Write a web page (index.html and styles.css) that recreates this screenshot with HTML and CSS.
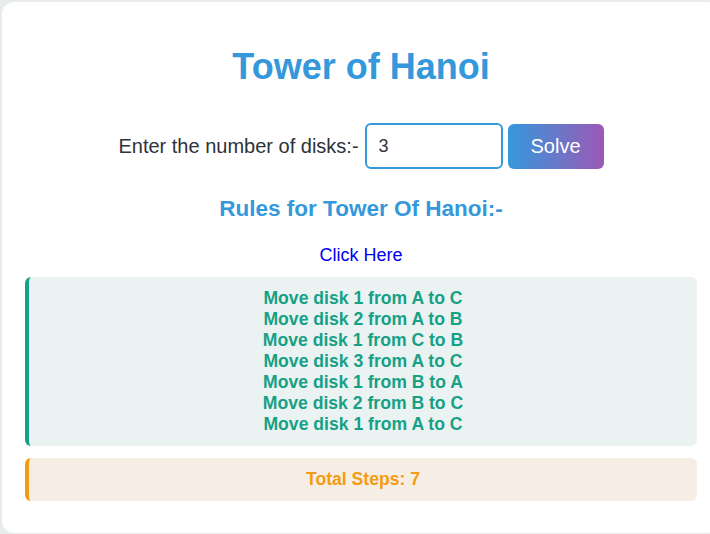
FILE: index.html
```html
<!DOCTYPE html>
<html lang="en">
<head>
<meta charset="UTF-8">
<title>Tower of Hanoi</title>
<link rel="stylesheet" href="styles.css">
</head>
<body>
<div class="card">
  <h1 class="title">Tower of Hanoi</h1>
  <div class="input-row">
    <label class="label" for="disks">Enter the number of disks:-</label>
    <input class="disk-input" id="disks" type="number" value="3">
    <button class="solve-btn">Solve</button>
  </div>
  <h3 class="rules">Rules for Tower Of Hanoi:-</h3>
  <div class="link-wrap"><a class="rules-link" href="#">Click Here</a></div>
  <div class="moves">
    <div class="move">Move disk 1 from A to C</div>
    <div class="move">Move disk 2 from A to B</div>
    <div class="move">Move disk 1 from C to B</div>
    <div class="move">Move disk 3 from A to C</div>
    <div class="move">Move disk 1 from B to A</div>
    <div class="move">Move disk 2 from B to C</div>
    <div class="move">Move disk 1 from A to C</div>
  </div>
  <div class="total">Total Steps: 7</div>
</div>
</body>
</html>
```
FILE: styles.css
```css
html, body {
  margin: 0;
  padding: 0;
  overflow: hidden;
}
body {
  background: #e8ecec;
  font-family: "Liberation Sans", Arial, sans-serif;
  color: #2c3e50;
  width: 710px;
  height: 534px;
}
.card {
  box-sizing: border-box;
  margin: 2px 0 0 2px;
  width: 718px;
  height: 531px;
  padding: 44px 23px 0;
  background: #ffffff;
  border-radius: 12px;
  text-align: center;
}
.title {
  margin: 0 0 36px;
  font-size: 36px;
  line-height: 41px;
  font-weight: bold;
  color: #3498db;
}
.input-row {
  display: flex;
  justify-content: center;
  align-items: center;
  height: 46px;
}
.label {
  font-size: 20px;
  color: #2d3238;
  margin-right: 6px;
}
.disk-input {
  box-sizing: border-box;
  width: 138px;
  height: 46px;
  border: 2px solid #3498db;
  border-radius: 6px;
  padding: 0 12px;
  font-family: "Liberation Sans", Arial, sans-serif;
  font-size: 18px;
  color: #333;
  outline: none;
  -moz-appearance: textfield;
  appearance: textfield;
}
.disk-input::-webkit-inner-spin-button,
.disk-input::-webkit-outer-spin-button {
  -webkit-appearance: none;
  margin: 0;
}
.solve-btn {
  box-sizing: border-box;
  margin-left: 5px;
  width: 96px;
  height: 45px;
  border: none;
  border-radius: 6px;
  background: linear-gradient(to right, #3498db, #9b59b6);
  color: #ffffff;
  font-family: "Liberation Sans", Arial, sans-serif;
  font-size: 20px;
  padding: 0;
}
.rules {
  margin: 27px 0 0;
  font-size: 22.5px;
  line-height: 25px;
  font-weight: bold;
  color: #3498db;
}
.link-wrap {
  margin-top: 24px;
  font-size: 18px;
  line-height: 20px;
}
.rules-link {
  color: #0000ee;
  text-decoration: none;
}
.moves {
  margin-top: 12px;
  padding: 11px 10px;
  background: #ebf3f2;
  border-left: 4px solid #16a085;
  border-radius: 6px;
}
.move {
  font-size: 17.6px;
  line-height: 21px;
  font-weight: bold;
  color: #16a085;
}
.total {
  margin-top: 12px;
  padding: 11px 10px 11px;
  background: #f6eee5;
  border-left: 4px solid #f39c12;
  border-radius: 6px;
  font-size: 17.6px;
  line-height: 21px;
  font-weight: bold;
  color: #f39c12;
}
```
